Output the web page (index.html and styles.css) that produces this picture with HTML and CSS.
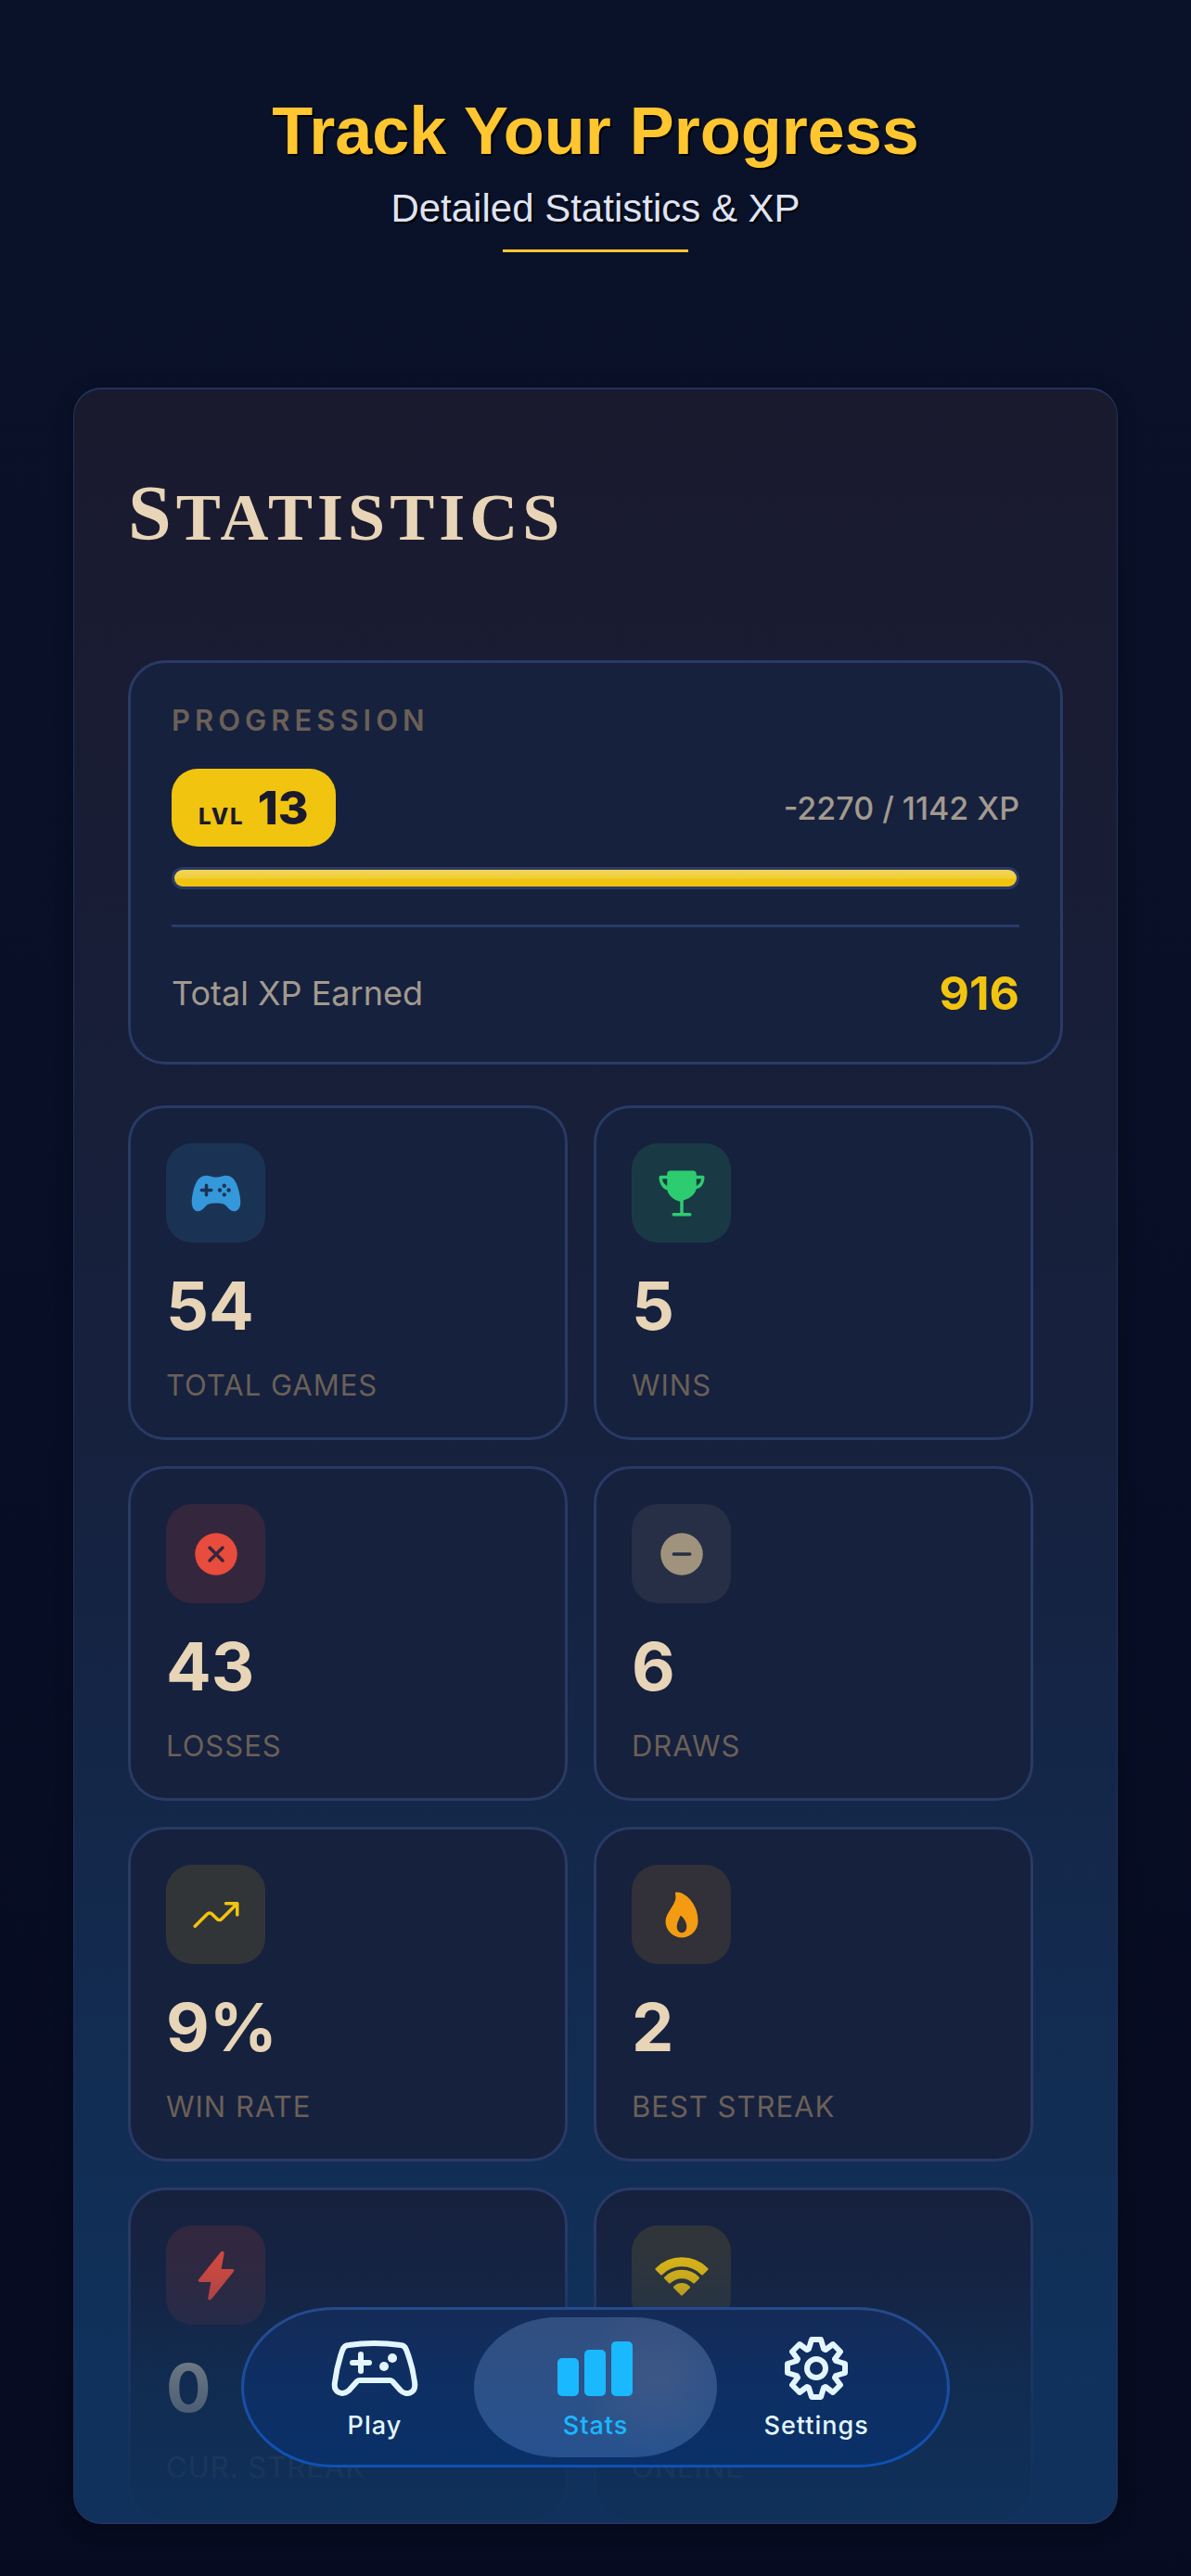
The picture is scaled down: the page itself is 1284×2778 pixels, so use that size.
FILE: index.html
```
<!DOCTYPE html>
<html lang="en">
  <head>
    <meta charset="utf-8">
    <meta name="viewport" content="width=device-width, initial-scale=1">
    <title>Track Your Progress</title>
    <link rel="stylesheet" href="styles.css">
  </head>
  <body>
    <header class="promo">
      <h1>Track Your Progress</h1>
      <p>Detailed Statistics &amp; XP</p>
    </header>

    <main class="screen">
      <h2 class="screen-title">Statistics</h2>

      <section class="card progression">
        <h3 class="progression-title">PROGRESSION</h3>
        <div class="row level-row">
          <div class="level-badge"><small>LVL</small> <strong>13</strong></div>
          <span class="xp-text">-2270 / 1142 XP</span>
        </div>
        <div class="xp-bar"><div class="xp-fill"></div></div>
        <div class="row total-row">
          <span class="total-label">Total XP Earned</span>
          <strong class="total-value">916</strong>
        </div>
      </section>

      <section class="stats">
        <div class="card stat">
          <div class="stat-icon blue">
            <svg viewBox="0 0 512 512"><path d="M483.13 245.38C461.92 149.49 430 98.31 382.65 84.33A107.13 107.13 0 00352 80c-13.71 0-25.65 3.34-38.28 6.88C298.5 91.15 281.21 96 256 96s-42.51-4.84-57.76-9.11C185.6 83.34 173.67 80 160 80a115.74 115.74 0 00-31.73 4.32c-47.1 13.92-79 65.08-100.52 161C4.61 348.54 16 413.71 59.69 428.83a56.62 56.62 0 0018.64 3.22c29.93 0 53.93-24.93 70.33-45.34 18.53-23.1 40.22-34.82 107.34-34.82 59.95 0 84.76 8.13 106.19 34.82 13.47 16.78 26.2 28.52 38.9 35.91 16.89 9.82 33.77 12 50.16 6.37 25.82-8.81 40.62-32.1 44-69.24 2.57-28.48-1.39-65.89-12.12-114.37zM208 240h-32v32a16 16 0 01-32 0v-32h-32a16 16 0 010-32h32v-32a16 16 0 0132 0v32h32a16 16 0 010 32zm84 4a20 20 0 1120-20 20 20 0 01-20 20zm44 44a20 20 0 1120-20 20 20 0 01-20 20zm0-88a20 20 0 1120-20 20 20 0 01-20 20zm44 44a20 20 0 1120-20 20 20 0 01-20 20z"/></svg>
          </div>
          <div class="stat-value">54</div>
          <div class="stat-label">TOTAL GAMES</div>
        </div>

        <div class="card stat">
          <div class="stat-icon green">
            <svg viewBox="0 0 512 512"><path d="M464 80H403.9a4 4 0 01-4-4V64A32 32 0 00367.9 32H144.1a32 32 0 00-32 32v12a4 4 0 01-4 4H48a16 16 0 00-16 16c0 54.53 30 112.45 76.52 125.35a7.82 7.82 0 015.55 5.9c5.77 26.89 23.52 52.5 51.41 73.61 20.91 15.83 45.85 27.5 68.27 32.48a8 8 0 016.25 7.8V444a4 4 0 01-4 4H176a16 16 0 000 32h160a16 16 0 000-32h-60a4 4 0 01-4-4V329.14a8 8 0 016.25-7.8c22.42-5 47.36-16.65 68.27-32.48 27.89-21.11 45.64-46.72 51.41-73.61a7.82 7.82 0 015.55-5.9C450 208.45 480 150.53 480 96a16 16 0 00-16-16zM112 182.22c-27-16-46.29-37.53-47.87-70.22H112zm288 0V112h47.87c-1.58 32.69-20.87 54.22-47.87 70.22z"/></svg>
          </div>
          <div class="stat-value">5</div>
          <div class="stat-label">WINS</div>
        </div>

        <div class="card stat">
          <div class="stat-icon red">
            <svg viewBox="0 0 512 512"><path fill-rule="evenodd" d="M256 48a208 208 0 100 416 208 208 0 000-416zm75.31 260.69a16 16 0 11-22.62 22.62L256 278.63l-52.69 52.68a16 16 0 01-22.62-22.62L233.37 256l-52.68-52.69a16 16 0 0122.62-22.62L256 233.37l52.69-52.68a16 16 0 0122.62 22.62L278.63 256z"/></svg>
          </div>
          <div class="stat-value">43</div>
          <div class="stat-label">LOSSES</div>
        </div>

        <div class="card stat">
          <div class="stat-icon sand">
            <svg viewBox="0 0 512 512"><path fill-rule="evenodd" d="M256 48a208 208 0 100 416 208 208 0 000-416zm80 224H176a16 16 0 010-32h160a16 16 0 010 32z"/></svg>
          </div>
          <div class="stat-value">6</div>
          <div class="stat-label">DRAWS</div>
        </div>

        <div class="card stat">
          <div class="stat-icon yellow">
            <svg class="line" viewBox="0 0 512 512"><path d="M352 144h112v112M48 368l121.37-121.37a32 32 0 0145.26 0l50.74 50.74a32 32 0 0045.26 0L448 160"/></svg>
          </div>
          <div class="stat-value">9%</div>
          <div class="stat-label">WIN RATE</div>
        </div>

        <div class="card stat">
          <div class="stat-icon orange">
            <svg viewBox="0 0 512 512"><path d="M394.23 197.56a300.43 300.43 0 00-53.37-90C301.2 61.65 249.05 32 208 32a16 16 0 00-15.48 20c13.87 53-14.88 97.07-45.31 143.72C122 234.36 96 274.27 96 320c0 88.22 71.78 160 160 160s160-71.78 160-160c0-43.3-7.32-84.49-21.77-122.44zM288.33 418.69C278 429.69 265.05 432 256 432s-22-2.31-32.33-13.31S208 390.24 208 368c0-25.14 8.82-44.28 17.34-62.78 4.95-10.74 10-21.67 13-33.37a8 8 0 0112.49-4.51A126.48 126.48 0 01275 292c18.17 24 29 52.42 29 76 0 22.24-5.42 39.77-15.67 50.69z"/></svg>
          </div>
          <div class="stat-value">2</div>
          <div class="stat-label">BEST STREAK</div>
        </div>

        <div class="card stat">
          <div class="stat-icon red">
            <svg viewBox="0 0 512 512"><path d="M194.82 496a18.36 18.36 0 01-18.1-21.53v-.11L204.83 320H96a16 16 0 01-12.44-26.06L302.73 23a18.45 18.45 0 0132.8 13.71c0 .3-.08.59-.13.89L307.19 192H416a16 16 0 0112.44 26.06L209.24 489a18.45 18.45 0 01-14.42 7z"/></svg>
          </div>
          <div class="stat-value">0</div>
          <div class="stat-label">CUR. STREAK</div>
        </div>

        <div class="card stat">
          <div class="stat-icon yellow">
            <svg class="wifi" viewBox="0 0 56 56"><path d="M1 21a38 38 0 0154 0l-5 5a31 31 0 00-44 0zM10.500 30.500a25 25 0 0135 0l-4.500 4.500a18.500 18.500 0 00-26 0zM20.500 40.500a11 11 0 0115 0L28 48z"/></svg>
          </div>
          <div class="stat-value">0</div>
          <div class="stat-label">ONLINE</div>
        </div>
      </section>

      <nav class="tab-bar">
        <a class="tab" href="#play">
          <svg class="outline" width="94" height="68" viewBox="0 0 94 68">
            <path d="M12 15Q14 9 19 9Q46 5 75 9Q79 9 81 14Q88 32 90 49C92 61 81 64 75 58L66 48Q65 47 63 47H31Q29 47 28 48L19 58C12 64 2 60 4 49Q6 32 12 15Z"/>
            <path d="M32 19v18M23 28h18"/>
            <circle class="dot" cx="66" cy="23" r="5"/>
            <circle class="dot" cx="57" cy="32" r="5"/>
          </svg>
          Play
        </a>
        <a class="tab active" href="#stats">
          <svg width="82" height="68" viewBox="0 0 82 68">
            <rect x="0" y="23" width="23" height="41" rx="5"/>
            <rect x="29" y="14" width="23" height="50" rx="5"/>
            <rect x="58" y="5" width="23" height="59" rx="5"/>
          </svg>
          Stats
        </a>
        <a class="tab" href="#settings">
          <svg class="outline" width="68" height="68" viewBox="-34 -34 68 68">
            <path d="M-5-31H5L8-21L10-20L18-26L26-18L20-10L21-8L31-5V5L21 8L20 10L26 18L18 26L10 20L8 21L5 31H-5L-8 21L-10 20L-18 26L-26 18L-20 10L-21 8L-31 5V-5L-21-8L-20-10L-26-18L-18-26L-10-20L-8-21Z"/>
            <circle r="10"/>
          </svg>
          Settings
        </a>
      </nav>
    </main>
  </body>
</html>
```
FILE: styles.css
```
:root {
  --gold: #ffc62f;
  --yellow: #f1c40f;
  --card: #16213e;
  --border: #2a3a66;
  --text: #e8d5b7;
  --text-secondary: #a39a8e;
  --text-muted: #6b6057;
}

* {
  box-sizing: border-box;
}

body {
  margin: 0;
  min-height: 100vh;
  padding: 99px 79px 57px;
  font-family: Inter, "Liberation Sans", sans-serif;
  color: var(--text);
  background: linear-gradient(#0a122a, #060b21);
}

h1,
h2,
h3,
p {
  margin: 0;
}

.promo {
  font-family: "Liberation Sans", Arial, sans-serif;
  text-align: center;
  text-shadow: 2px 2px 0 #000;
  margin-bottom: 146px;
}

.promo h1 {
  color: var(--gold);
  font-size: 72px;
  line-height: 84px;
}

.promo p {
  margin-top: 18px;
  color: #dfe3f3;
  font-size: 42px;
  line-height: 48px;
}

.promo::after {
  content: "";
  display: block;
  width: 200px;
  height: 3px;
  margin: 20px auto 0;
  background: var(--gold);
}

.screen {
  position: relative;
  padding: 86px 58px 0;
  border: 2px solid #20335d;
  border-width: 2px 1px;
  border-radius: 30px;
  overflow: hidden;
  background: linear-gradient(#1a1a2e, #16213e 50%, #0f3460);
  box-shadow: 0 4px 20px rgba(0, 0, 0, 0.25);
}

/* the list fades out behind the tab bar */
.screen::after {
  content: "";
  position: absolute;
  inset: auto 0 0;
  height: 340px;
  background: linear-gradient(
    rgba(15, 49, 91, 0),
    rgba(15, 49, 91, 0.15) 20%,
    rgba(15, 49, 91, 0.6) 52%,
    rgba(15, 49, 91, 0.88) 82%,
    rgba(15, 49, 91, 0.97)
  );
}

.screen-title {
  margin-bottom: 106px;
  font-family: "Liberation Serif", serif;
  font-size: 72px;
  line-height: 96px;
  letter-spacing: 5px;
  text-transform: uppercase;
}

.screen-title::first-letter {
  font-size: 84px;
}

.card {
  background: var(--card);
  border: 3px solid var(--border);
  border-radius: 40px;
}

.row {
  display: flex;
  justify-content: space-between;
  align-items: center;
}

.progression {
  padding: 44px;
}

.progression-title {
  color: var(--text-muted);
  font-size: 31px;
  font-weight: 600;
  line-height: 36px;
  letter-spacing: 5px;
}

.level-row {
  margin: 34px 0 22px;
}

.level-badge {
  display: flex;
  align-items: baseline;
  gap: 14px;
  padding: 12px 29px;
  border-radius: 28px;
  background: var(--yellow);
  color: #1a1a2e;
  line-height: 60px;
}

.level-badge small {
  font-size: 24px;
  font-weight: 800;
  line-height: 30px;
  letter-spacing: 2px;
}

.level-badge strong {
  font-size: 50px;
  font-weight: 800;
}

.xp-text {
  color: var(--text-secondary);
  font-size: 34px;
  font-weight: 500;
}

.xp-bar {
  padding: 3px;
  border-radius: 12px;
  background: var(--border);
}

.xp-fill {
  height: 18px;
  border-radius: 9px;
  background: linear-gradient(#f2d45c, #f0d03c 45%, var(--yellow) 60%);
}

.total-row {
  margin-top: 38px;
  padding-top: 41px;
  border-top: 3px solid var(--border);
}

.total-label {
  color: var(--text-secondary);
  font-size: 36px;
}

.total-value {
  color: var(--yellow);
  font-size: 50px;
  line-height: 60px;
}

.stats {
  display: grid;
  grid-template-columns: 1fr 1fr;
  gap: 28px;
  margin: 44px 32px 0 0;
}

.stat {
  padding: 38px;
}

.stat-icon {
  display: grid;
  place-items: center;
  width: 107px;
  height: 107px;
  border-radius: 28px;
}

.stat-icon svg {
  width: 56px;
  height: 56px;
  fill: currentColor;
}

.stat-icon .line {
  fill: none;
  stroke: currentColor;
  stroke-width: 32;
  stroke-linecap: round;
  stroke-linejoin: round;
}

.stat-icon .wifi {
  stroke: currentColor;
  stroke-width: 3;
  stroke-linejoin: round;
  overflow: visible;
}

.blue {
  color: #3498db;
  background: rgba(52, 152, 219, 0.15);
}

.green {
  color: #2ecc71;
  background: rgba(46, 204, 113, 0.15);
}

.red {
  color: #e74c3c;
  background: rgba(231, 76, 60, 0.15);
}

.sand {
  color: #a0937d;
  background: rgba(160, 147, 125, 0.12);
}

.yellow {
  color: var(--yellow);
  background: rgba(241, 196, 15, 0.13);
}

.orange {
  color: #f39c12;
  background: rgba(243, 156, 18, 0.13);
}

.stat-value {
  margin: 24px 0;
  font-size: 72px;
  font-weight: 700;
  line-height: 88px;
}

.stat-label {
  color: var(--text-muted);
  font-size: 31px;
  line-height: 36px;
  letter-spacing: 1px;
}

.tab-bar {
  position: absolute;
  z-index: 1;
  bottom: 59px;
  left: 16%;
  right: 16%;
  display: grid;
  grid-template-columns: repeat(3, 1fr);
  padding: 8px 22px;
  border: 3px solid transparent;
  border-radius: 100px / 87px;
  background:
    linear-gradient(#152b57, #0d2f64 50%, #0a3068) padding-box,
    linear-gradient(#264a8c, #0f52b5) border-box;
}

.tab {
  display: flex;
  flex-direction: column;
  align-items: center;
  gap: 11px;
  margin: 0 -12px;
  padding: 21px 0 18px;
  border-radius: 90px / 75px;
  color: #e3f6ff;
  font-size: 27px;
  font-weight: 500;
  line-height: 33px;
  letter-spacing: 1px;
  text-decoration: none;
}

.tab svg {
  fill: currentColor;
}

.tab .outline {
  fill: none;
  stroke: currentColor;
  stroke-width: 6;
  stroke-linecap: round;
  stroke-linejoin: round;
}

.tab .dot {
  fill: currentColor;
  stroke: none;
}

.tab.active {
  color: #1ab8ff;
  background:
    radial-gradient(circle at 75% 45%, rgba(130, 120, 130, 0.18), transparent 40%),
    linear-gradient(#324f80, #27528f);
}
```
